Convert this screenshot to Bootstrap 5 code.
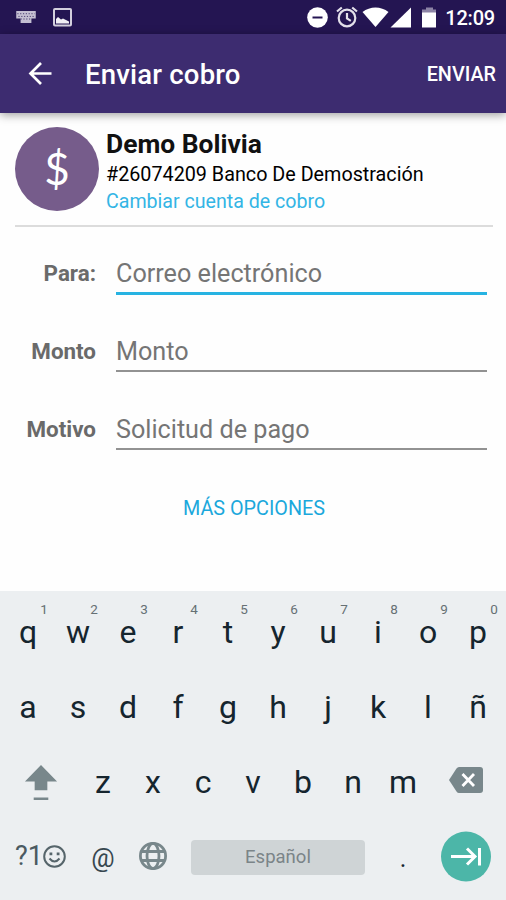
<!DOCTYPE html>
<html lang="es">
<head>
<meta charset="utf-8">
<meta name="viewport" content="width=device-width, initial-scale=1">
<title>Enviar cobro</title>
<link href="https://cdn.jsdelivr.net/npm/bootstrap@5.3.0/dist/css/bootstrap.min.css" rel="stylesheet">
<style>
body{font-family:Roboto,"Liberation Sans",sans-serif;background:#fefefe;height:900px;overflow:hidden}
svg{display:block;flex:none}
.statusbar{height:34px;background:#241552;color:#fff;padding:0 11px 0 15px}
.clock{font-size:20px;font-weight:500;line-height:34px;padding-top:1px;margin-left:2px;letter-spacing:-.2px}
.appbar{height:79px;background:#3d2c70;color:#fff;padding:0 10px 0 25px;box-shadow:0 2px 9px rgba(0,0,0,.38);z-index:1;position:relative}
.title{font-size:27.5px;font-weight:500;line-height:79px;padding-top:2px;margin-left:30px;letter-spacing:.2px}
.send{font-size:19.8px;font-weight:500;line-height:79px;padding-top:2px}
.account{height:114px;margin:0 13px 0 15px;padding-top:14px;border-bottom:2px solid #dcdcdc}
.avatar{width:84px;height:84px;background:#765c8b;color:#fff;font:44px/83px Lato,"Noto Sans",sans-serif}
.who{margin-left:7px;color:#000}
.name{font-size:26.4px;font-weight:700;line-height:34px;color:#111}
.acct{font-size:19.75px;line-height:28px}
.change{font-size:19.6px;line-height:25px;color:#33b5e5;text-decoration:none}
.fields{padding:26px 19px 0 0}
.field{height:44px;margin-bottom:34px}
.flabel{width:96px;margin-right:20px;font-size:22.4px;font-weight:700;line-height:41px;color:#6a6a6a}
.entry,.entry:focus{border:0;border-bottom:2px solid #929292;border-radius:0;background:none;padding:2px 0 0;height:41px;font-size:25.2px;line-height:37px;box-shadow:none}
.entry.active{border-bottom:3px solid #27b3e2;height:42px}
.entry::placeholder{color:#757575;opacity:1}
.more{font-size:19.8px;line-height:30px;color:#1ba8dc;text-decoration:none;display:inline-block;margin:7px 0 0 2px}
.keyboard{height:309px;background:#eceff1;padding:4px 3px 0;color:#15252e}
.krow{height:75px;font-size:32px;line-height:75px}
.key{width:50px;text-align:center;position:relative}
.wide{width:75px}
.hint{position:absolute;right:2px;top:5px;width:14px;font-size:13.5px;line-height:18px;color:#667074}
.space{width:174px;height:35px;margin:0 13px;border-radius:4px;background:#cfd4d6;color:#7b8488;font-size:18.5px;line-height:35px}
.sym{font-size:27px;color:#4b5a61}
.at{font-size:26px;color:#37474f;padding-top:2px}
.dot{font-size:25px;padding-top:1px}
.lower{padding-bottom:2px}
</style>
</head>
<body class="d-flex flex-column">
<header class="statusbar d-flex align-items-center">
  <svg width="22" height="13" viewBox="0 0 20 12"><path fill="#c4bfd2" d="M1 0h18v7h-4v4H5V7H1z"/><path stroke="#3b2d65" stroke-width=".8" stroke-dasharray="1.1 1.5" d="M2 2.500h16M3 5h15M5 7.400h10"/></svg>
  <svg width="19" height="19" viewBox="0 0 19 19" class="ms-3 me-auto"><rect x="0" y="1" width="17" height="16.500" rx="1" fill="none" stroke="#d3cfdd" stroke-width="2" transform="translate(1)"/><path fill="#f1eff5" d="M3 15.500v-4.500l2-2 3 2.500 2-1 6 3v2z"/></svg>
  <svg width="21" height="21" viewBox="0 0 21 21"><circle cx="10.500" cy="10.500" r="10.300" fill="#fff"/><path stroke="#241552" stroke-width="2" d="M5.500 10.500h10"/></svg>
  <svg width="22" height="22" viewBox="0 0 22 22" fill="none" stroke="#e3e0ea" stroke-width="2.200" class="ms-2"><circle cx="11" cy="12" r="8.300"/><path d="M1 5.500l4.800-4M21 5.500l-4.800-4M11 7v5.500l3.800 2.400"/></svg>
  <svg class="ms-1" width="81" height="24" viewBox="0 0 81 24" fill="#fff"><path d="M.5 7C8 1 19 1 26.500 7L13.500 22z"/><path d="M49 2.500V22.500H28.500z"/><path fill="#8d84a6" d="M64 2.500h7v2h3v5H60v-5h4z"/><path d="M60 7.500h14v15H60z"/></svg>
  <span class="clock">12:09</span>
</header>
<nav class="appbar d-flex align-items-center">
  <svg width="30" height="30" viewBox="0 0 30 30" fill="none" stroke="#fff" stroke-width="2.700"><path d="M26.500 14.500H5.500M16 4L5.500 14.500 16 25"/></svg>
  <span class="title">Enviar cobro</span>
  <span class="send ms-auto">ENVIAR</span>
</nav>
<main class="flex-grow-1 overflow-hidden">
  <section class="account d-flex">
    <div class="avatar rounded-circle text-center">$</div>
    <div class="who d-flex flex-column">
      <span class="name">Demo Bolivia</span>
      <span class="acct">#26074209 Banco De Demostración</span>
      <a class="change" href="#">Cambiar cuenta de cobro</a>
    </div>
  </section>
  <form class="fields">
    <div class="field d-flex"><label class="flabel text-end" for="para">Para:</label><input id="para" class="entry active form-control flex-fill w-auto" placeholder="Correo electrónico"></div>
    <div class="field d-flex"><label class="flabel text-end" for="monto">Monto</label><input id="monto" class="entry form-control flex-fill w-auto" placeholder="Monto"></div>
    <div class="field d-flex"><label class="flabel text-end" for="motivo">Motivo</label><input id="motivo" class="entry form-control flex-fill w-auto" placeholder="Solicitud de pago"></div>
  </form>
  <div class="text-center"><a class="more" href="#">MÁS OPCIONES</a></div>
</main>
<section class="keyboard">
  <div class="krow d-flex">
    <div class="key">q<span class="hint">1</span></div><div class="key">w<span class="hint">2</span></div><div class="key">e<span class="hint">3</span></div><div class="key">r<span class="hint">4</span></div><div class="key">t<span class="hint">5</span></div><div class="key">y<span class="hint">6</span></div><div class="key">u<span class="hint">7</span></div><div class="key">i<span class="hint">8</span></div><div class="key">o<span class="hint">9</span></div><div class="key">p<span class="hint">0</span></div>
  </div>
  <div class="krow d-flex">
    <div class="key">a</div><div class="key">s</div><div class="key">d</div><div class="key">f</div><div class="key">g</div><div class="key">h</div><div class="key">j</div><div class="key">k</div><div class="key">l</div><div class="key">ñ</div>
  </div>
  <div class="krow d-flex align-items-center">
    <div class="wide d-flex justify-content-center"><svg width="34" height="37" viewBox="0 0 34 38" fill="#78878b"><path d="M17 1l16.500 17H23.500v9h-13v-9H.5zM9.500 34.500h15v2.500h-15z"/></svg></div>
    <div class="key">z</div><div class="key">x</div><div class="key">c</div><div class="key">v</div><div class="key">b</div><div class="key">n</div><div class="key">m</div>
    <div class="wide lower d-flex justify-content-center"><svg class="mb-1" width="34" height="26" viewBox="0 0 34 26"><path fill="#78878b" d="M10 0h21q3 0 3 3v20q0 3-3 3H10q-1.500 0-2.500-1.500L0 13 7.500 1.500Q8.500 0 10 0z"/><path stroke="#fff" stroke-width="2.800" d="M13.500 7l11.500 12M25 7L13.500 19"/></svg></div>
  </div>
  <div class="krow d-flex align-items-center">
    <div class="wide lower sym d-flex justify-content-center align-items-center">?1<svg width="23" height="23" viewBox="0 0 23 23" fill="none" stroke="#56656b" stroke-width="2"><circle cx="11.500" cy="11.500" r="10.300"/><path d="M6.500 13.500q5 6 10 0"/><path fill="#56656b" stroke="none" d="M6.500 7.500h2.800v2.800H6.500zM13.700 7.500h2.800v2.800h-2.800z"/></svg></div>
    <div class="key at">@</div>
    <div class="key lower d-flex justify-content-center"><svg width="29" height="29" viewBox="0 0 29 29" fill="none" stroke="#78878b" stroke-width="2.800"><circle cx="14" cy="14" r="12.600"/><ellipse cx="14" cy="14" rx="6" ry="12.600"/><path d="M2.500 9.500h23M2.500 18.500h23"/></svg></div>
    <div class="space text-center">Español</div>
    <div class="key dot">.</div>
    <div class="wide lower d-flex justify-content-center"><svg width="50" height="51" viewBox="0 0 50 51"><circle cx="25" cy="25.500" r="25" fill="#4cb6a8"/><path fill="none" stroke="#fff" stroke-width="3" d="M10 25.500H33M26 17.500l8 8-8 8M38.500 17v17.500"/></svg></div>
  </div>
</section>
<script src="https://cdn.jsdelivr.net/npm/bootstrap@5.3.0/dist/js/bootstrap.bundle.min.js"></script>
</body>
</html>
